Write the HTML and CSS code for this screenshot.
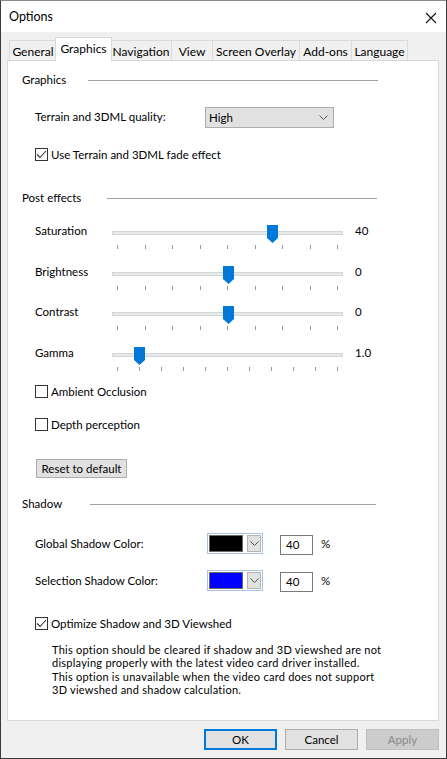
FILE: index.html
```html
<!DOCTYPE html>
<html>
<head>
<meta charset="utf-8">
<title>Options</title>
<link rel="stylesheet" href="styles.css">
</head>
<body>
<div class="window">
  <div class="titlebar">
    <span class="title">Options</span>
    <svg class="close" width="12" height="12" viewBox="0 0 12 12"><path d="M1 1 L11 11 M11 1 L1 11" stroke="#111" stroke-width="1.1" fill="none"/></svg>
  </div>
  <div class="body">
    <div class="tabs">
      <div class="tab tab-general">General</div>
      <div class="tab tab-graphics active">Graphics</div>
      <div class="tab tab-nav">Navigation</div>
      <div class="tab tab-view">View</div>
      <div class="tab tab-overlay">Screen Overlay</div>
      <div class="tab tab-addons">Add-ons</div>
      <div class="tab tab-lang">Language</div>
    </div>
    <div class="panel">
      <div class="group-head head-graphics"><span class="group-title">Graphics</span><span class="rule"></span></div>

      <div class="row row-quality">
        <span class="label quality-label">Terrain and 3DML quality:</span>
        <div class="select"><span>High</span>
          <svg class="chev" width="9" height="5" viewBox="0 0 9 5"><path d="M0.5 0.5 L4.5 4.5 L8.5 0.5" stroke="#555" fill="none" stroke-width="1"/></svg>
        </div>
      </div>

      <div class="check row-fade">
        <span class="box"><svg width="13" height="13" viewBox="0 0 13 13"><path d="M2 6.5 L5 9.5 L11 3" stroke="#333" stroke-width="1.1" fill="none"/></svg></span>
        <span>Use Terrain and 3DML fade effect</span>
      </div>

      <div class="group-head head-post"><span class="group-title">Post effects</span><span class="rule"></span></div>

      <div class="sliders">
        <div class="slider-row">
          <span class="slabel">Saturation</span>
          <div class="slider">
            <div class="track"></div>
            <div class="ticks"><i></i><i></i><i></i><i></i><i></i><i></i><i></i><i></i><i></i></div>
            <div class="range"><svg class="thumb" style="left: 70%" width="11" height="18" viewBox="0 0 11 18"><path d="M0 0 H11 V13 L5.5 18 L0 13 Z" fill="#0078d7"/></svg></div>
          </div>
          <span class="svalue">40</span>
        </div>
        <div class="slider-row">
          <span class="slabel">Brightness</span>
          <div class="slider">
            <div class="track"></div>
            <div class="ticks"><i></i><i></i><i></i><i></i><i></i><i></i><i></i><i></i><i></i></div>
            <div class="range"><svg class="thumb" style="left: 50%" width="11" height="18" viewBox="0 0 11 18"><path d="M0 0 H11 V13 L5.5 18 L0 13 Z" fill="#0078d7"/></svg></div>
          </div>
          <span class="svalue">0</span>
        </div>
        <div class="slider-row">
          <span class="slabel">Contrast</span>
          <div class="slider">
            <div class="track"></div>
            <div class="ticks"><i></i><i></i><i></i><i></i><i></i><i></i><i></i><i></i><i></i></div>
            <div class="range"><svg class="thumb" style="left: 50%" width="11" height="18" viewBox="0 0 11 18"><path d="M0 0 H11 V13 L5.5 18 L0 13 Z" fill="#0078d7"/></svg></div>
          </div>
          <span class="svalue">0</span>
        </div>
        <div class="slider-row">
          <span class="slabel">Gamma</span>
          <div class="slider">
            <div class="track"></div>
            <div class="ticks"><i></i><i></i><i></i><i></i><i></i><i></i><i></i><i></i><i></i><i></i><i></i></div>
            <div class="range"><svg class="thumb" style="left: 10%" width="11" height="18" viewBox="0 0 11 18"><path d="M0 0 H11 V13 L5.5 18 L0 13 Z" fill="#0078d7"/></svg></div>
          </div>
          <span class="svalue">1.0</span>
        </div>
      </div>

      <div class="check row-ambient">
        <span class="box"></span>
        <span>Ambient Occlusion</span>
      </div>
      <div class="check row-depth">
        <span class="box"></span>
        <span>Depth perception</span>
      </div>

      <div class="reset-wrap"><button class="btn reset">Reset to default</button></div>

      <div class="group-head head-shadow"><span class="group-title">Shadow</span><span class="rule"></span></div>

      <div class="row color-row row-global">
        <span class="label color-label">Global Shadow Color:</span>
        <div class="picker">
          <span class="swatch swatch-black"></span>
          <span class="pick-btn"><svg width="9" height="5" viewBox="0 0 9 5"><path d="M0.5 0.5 L4.5 4.5 L8.5 0.5" stroke="#555" fill="none" stroke-width="1"/></svg></span>
        </div>
        <span class="num">40</span>
        <span class="pct">%</span>
      </div>
      <div class="row color-row row-selection">
        <span class="label color-label">Selection Shadow Color:</span>
        <div class="picker">
          <span class="swatch swatch-blue"></span>
          <span class="pick-btn"><svg width="9" height="5" viewBox="0 0 9 5"><path d="M0.5 0.5 L4.5 4.5 L8.5 0.5" stroke="#555" fill="none" stroke-width="1"/></svg></span>
        </div>
        <span class="num">40</span>
        <span class="pct">%</span>
      </div>

      <div class="check row-optimize">
        <span class="box"><svg width="13" height="13" viewBox="0 0 13 13"><path d="M2 6.5 L5 9.5 L11 3" stroke="#333" stroke-width="1.1" fill="none"/></svg></span>
        <span>Optimize Shadow and 3D Viewshed</span>
      </div>
      <div class="note">
        <span class="note-line">This option should be cleared if shadow and 3D viewshed are not</span>
        <span class="note-line">displaying properly with the latest video card driver installed.</span>
        <span class="note-line">This option is unavailable when the video card does not support</span>
        <span class="note-line">3D viewshed and shadow calculation.</span>
      </div>
    </div>
    <div class="buttons">
      <button class="btn dlg ok">OK</button>
      <button class="btn dlg">Cancel</button>
      <button class="btn dlg disabled">Apply</button>
    </div>
  </div>
</div>
</body>
</html>
```

FILE: styles.css
```css
* { box-sizing: border-box; }
html, body { margin: 0; padding: 0; }
body {
  font-family: Lato, "Noto Sans", sans-serif;
  font-size: 11.5px;
  color: #000;
  background: #f0f0f0;
}
.window {
  width: 447px;
  height: 759px;
  border: 1px solid #3a3a3a;
  border-top-color: #8a8a8a;
  background: #f0f0f0;
  display: flex;
  flex-direction: column;
}
.titlebar {
  height: 31px;
  background: #fff;
  display: flex;
  align-items: center;
  justify-content: space-between;
  padding: 0 9px 0 8px;
}
.title { font-size: 12.5px; line-height: 16px; }
.close { display: block; margin-top: 2px; }
.body {
  padding: 5px 7px 0 6px;
  display: flex;
  flex-direction: column;
}
.tabs {
  display: flex;
  align-items: flex-end;
  height: 23px;
  padding-left: 2px;
}
.tab {
  height: 20px;
  border: 1px solid #d9d9d9;
  border-bottom: none;
  border-left: none;
  background: #f0f0f0;
  display: flex;
  align-items: center;
  justify-content: center;
  padding-top: 1px;
  white-space: nowrap;
  font-size: 12px;
}
.tab-general { width: 48px; border-left: 1px solid #d9d9d9; }
.tab-graphics { width: 55px; }
.tab-nav { width: 61px; }
.tab-view { width: 41px; }
.tab-overlay { width: 87px; }
.tab-addons { width: 52px; }
.tab-lang { width: 56px; }
.tab.active {
  height: 24px;
  width: 57px;
  margin: 0 -1px -1px -2px;
  background: #fff;
  border-left: 1px solid #d9d9d9;
  position: relative;
  z-index: 1;
  padding-top: 0;
  padding-bottom: 3px;
}
.panel {
  height: 661px;
  background: #fff;
  border: 1px solid #d9d9d9;
  padding: 0 0 0 14px;
  display: flex;
  flex-direction: column;
}
.group-head {
  height: 16px;
  display: flex;
  align-items: center;
  margin-right: 60px;
}
.group-title { line-height: 16px; white-space: nowrap; }
.rule { flex: 1; height: 1px; background: #a0a0a0; }
.head-graphics { margin-top: 11px; }
.head-graphics .group-title { width: 66px; }
.head-post { margin-top: 28px; margin-right: 61px; }
.head-post .group-title { width: 85px; }
.head-shadow { margin-top: 18px; margin-right: 62px; }
.head-shadow .group-title { width: 68px; }

.row {
  display: flex;
  align-items: center;
  padding-left: 13px;
}
.label { line-height: 16px; white-space: nowrap; }
.row-quality { margin-top: 19px; height: 20px; }
.quality-label { width: 170px; }
.select {
  width: 129px;
  height: 21px;
  background: #e1e1e1;
  border: 1px solid #adadad;
  display: flex;
  align-items: center;
  justify-content: space-between;
  padding: 0 5px 0 3px;
}
.chev { display: block; }

.check {
  display: flex;
  align-items: center;
  height: 16px;
  padding-left: 13px;
  white-space: nowrap;
}
.box {
  width: 13px;
  height: 13px;
  border: 1px solid #333;
  background: #fff;
  margin-right: 3px;
  position: relative;
  flex: none;
}
.box svg { position: absolute; left: -1px; top: -1px; }
.row-fade { margin-top: 19px; }

.sliders {
  margin-top: 17px;
  display: flex;
  flex-direction: column;
  gap: 14.7px;
}
.slider-row {
  height: 26px;
  display: flex;
  align-items: flex-start;
  padding-left: 13px;
}
.slabel { width: 77px; line-height: 16px; }
.slider {
  width: 231px;
  height: 26px;
  position: relative;
}
.track {
  position: absolute;
  left: 0;
  right: 0;
  top: 8px;
  height: 4px;
  background: #e7eaea;
  border: 1px solid #d6d6d6;
}
.ticks {
  position: absolute;
  left: 5px;
  right: 5px;
  top: 22px;
  height: 4px;
  display: flex;
  justify-content: space-between;
}
.ticks i {
  width: 1px;
  height: 4px;
  background: #9a9a9a;
}
.range {
  position: absolute;
  left: 5.5px;
  right: 4.5px;
  top: 2px;
  height: 18px;
}
.thumb {
  position: absolute;
  top: 0;
  margin-left: -5.5px;
  display: block;
}
.svalue { margin-left: 12px; line-height: 16px; }

.row-ambient { margin-top: 12px; }
.row-depth { margin-top: 17px; }

.btn {
  font-family: inherit;
  font-size: 11.5px;
  color: #000;
  background: #e1e1e1;
  border: 1px solid #adadad;
  padding: 0;
  margin: 0;
}
.reset-wrap { margin-top: 27px; padding-left: 14px; display: flex; }
.reset { width: 91px; height: 19px; line-height: 16px; }

.color-row { height: 21px; }
.row-global { margin-top: 21px; }
.row-selection { margin-top: 16px; }
.color-label { width: 172px; }
.picker {
  width: 56px;
  height: 21px;
  border: 1px solid #a9c2e6;
  background: #fff;
  display: flex;
  align-items: center;
  padding: 0 1px;
}
.swatch {
  width: 35px;
  height: 17px;
  border: 1px solid #6a6a6a;
}
.swatch-black { background: #000; }
.swatch-blue { background: #0000ff; }
.pick-btn {
  margin-left: 4px;
  width: 14px;
  height: 17px;
  background: #e1e1e1;
  border: 1px solid #b5b5b5;
  display: flex;
  align-items: center;
  justify-content: center;
}
.pick-btn svg { display: block; }
.num {
  margin-left: 17px;
  width: 33px;
  height: 20px;
  border: 1px solid #7a7a7a;
  padding-left: 5px;
  line-height: 18px;
  margin-top: 2px;
}
.pct { margin-left: 8px; line-height: 16px; }

.row-optimize { margin-top: 24px; }
.note {
  margin: 12px 0 0 30px;
  display: flex;
  flex-direction: column;
  font-size: 11px;
  letter-spacing: 0.25px;
}
.note-line {
  display: block;
  height: 13.3px;
  line-height: 13.2px;
  white-space: nowrap;
}

.buttons {
  margin-top: 8px;
  display: flex;
  justify-content: flex-end;
  gap: 8px;
}
.dlg { width: 73px; height: 21px; }
.ok { border: 2px solid #0078d7; }
.disabled { background: #cccccc; border-color: #bfbfbf; color: #8a8a8a; }
```
